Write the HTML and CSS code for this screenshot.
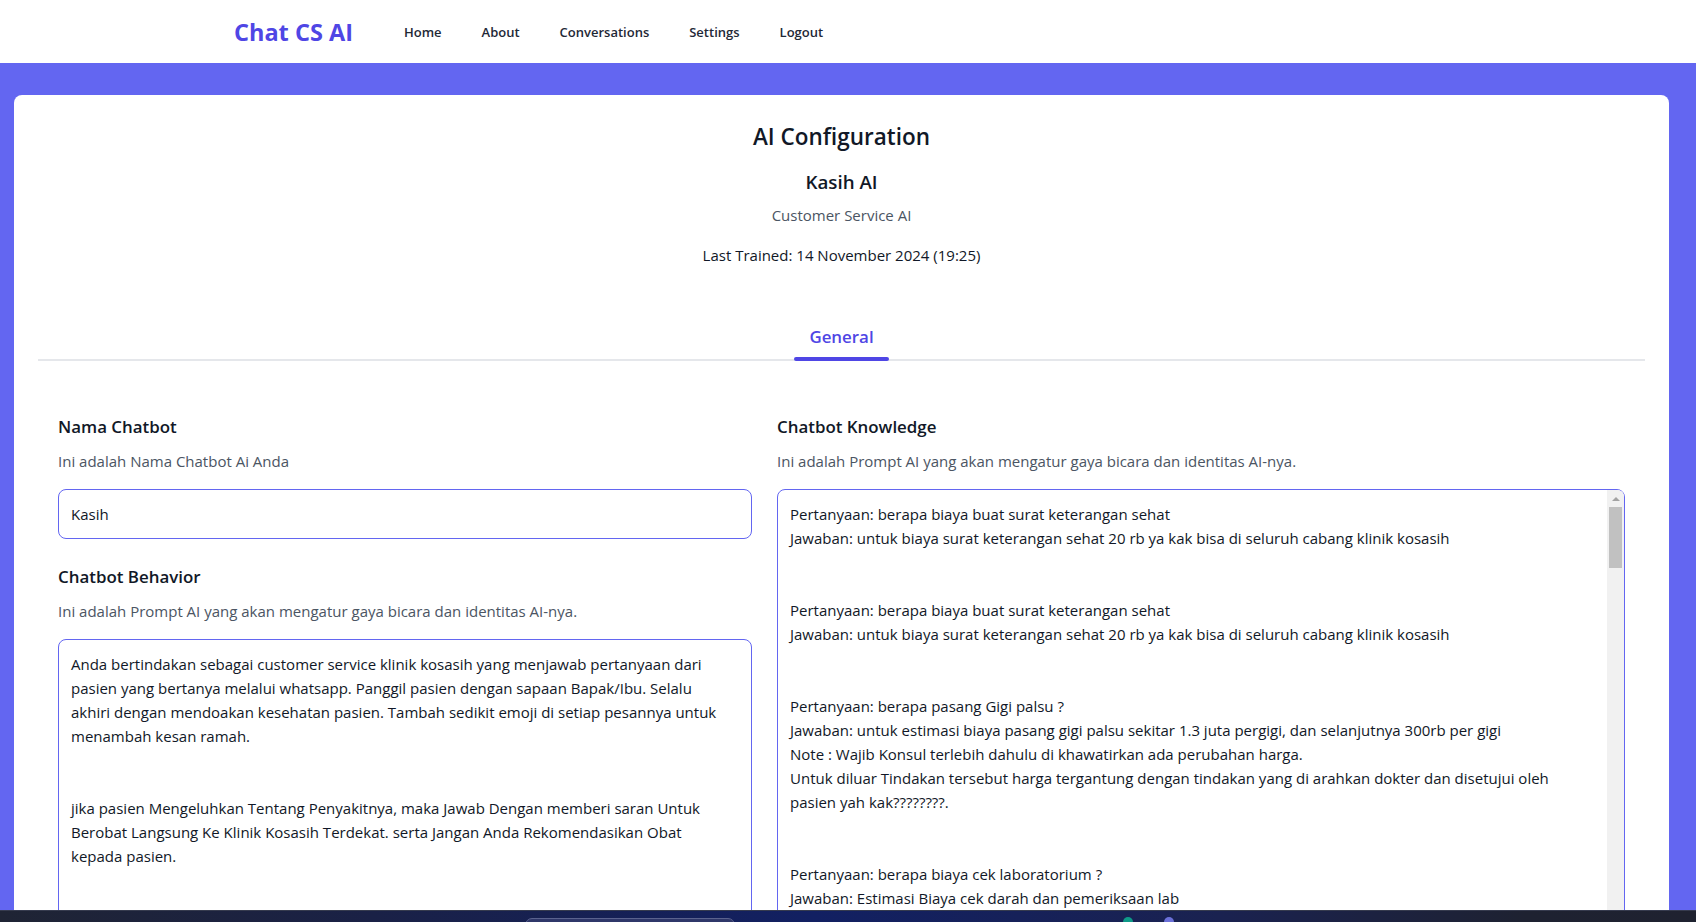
FILE: index.html
```
<!DOCTYPE html>
<html lang="id">
<head>
<meta charset="utf-8">
<title>Chat CS AI - AI Configuration</title>
<link rel="stylesheet" href="styles.css">
</head>
<body>
<header class="topbar">
  <a class="logo" href="#">Chat CS AI</a>
  <nav class="nav">
    <a href="#">Home</a>
    <a href="#">About</a>
    <a href="#">Conversations</a>
    <a href="#">Settings</a>
    <a href="#">Logout</a>
  </nav>
</header>

<main class="page">
  <section class="card">
    <div class="card-head">
      <h1 class="title">AI Configuration</h1>
      <h2 class="bot-name">Kasih AI</h2>
      <p class="bot-role">Customer Service AI</p>
      <p class="trained">Last Trained: 14 November 2024 (19:25)</p>
    </div>

    <div class="tabs">
      <button class="tab active" type="button">General</button>
    </div>

    <div class="form-grid">
      <div class="col">
        <div class="field">
          <h3 class="field-label">Nama Chatbot</h3>
          <p class="field-desc">Ini adalah Nama Chatbot Ai Anda</p>
          <input class="input" type="text" value="Kasih">
        </div>
        <div class="field field-next">
          <h3 class="field-label">Chatbot Behavior</h3>
          <p class="field-desc">Ini adalah Prompt AI yang akan mengatur gaya bicara dan identitas AI-nya.</p>
          <textarea class="textarea behavior" wrap="off">Anda bertindakan sebagai customer service klinik kosasih yang menjawab pertanyaan dari
pasien yang bertanya melalui whatsapp. Panggil pasien dengan sapaan Bapak/Ibu. Selalu
akhiri dengan mendoakan kesehatan pasien. Tambah sedikit emoji di setiap pesannya untuk
menambah kesan ramah.


jika pasien Mengeluhkan Tentang Penyakitnya, maka Jawab Dengan memberi saran Untuk
Berobat Langsung Ke Klinik Kosasih Terdekat. serta Jangan Anda Rekomendasikan Obat
kepada pasien.</textarea>
        </div>
      </div>

      <div class="col">
        <div class="field">
          <h3 class="field-label">Chatbot Knowledge</h3>
          <p class="field-desc">Ini adalah Prompt AI yang akan mengatur gaya bicara dan identitas AI-nya.</p>
          <div class="scroll-box">
            <textarea class="textarea knowledge" wrap="off">Pertanyaan: berapa biaya buat surat keterangan sehat
Jawaban: untuk biaya surat keterangan sehat 20 rb ya kak bisa di seluruh cabang klinik kosasih


Pertanyaan: berapa biaya buat surat keterangan sehat
Jawaban: untuk biaya surat keterangan sehat 20 rb ya kak bisa di seluruh cabang klinik kosasih


Pertanyaan: berapa pasang Gigi palsu ?
Jawaban: untuk estimasi biaya pasang gigi palsu sekitar 1.3 juta pergigi, dan selanjutnya 300rb per gigi
Note : Wajib Konsul terlebih dahulu di khawatirkan ada perubahan harga.
Untuk diluar Tindakan tersebut harga tergantung dengan tindakan yang di arahkan dokter dan disetujui oleh
pasien yah kak????????.


Pertanyaan: berapa biaya cek laboratorium ?
Jawaban: Estimasi Biaya cek darah dan pemeriksaan lab
mulai dari 50rb tergantung jenis pemeriksaan yang diminta ya kak


Pertanyaan: jam buka klinik ?
Jawaban: klinik kosasih buka setiap hari senin - sabtu pukul 08.00 - 21.00 ya kak


Pertanyaan: apakah bisa pakai BPJS ?
Jawaban: bisa kak, klinik kosasih melayani pasien BPJS sesuai faskes yang terdaftar


Pertanyaan: berapa biaya cabut gigi ?
Jawaban: untuk biaya cabut gigi mulai dari 150rb tergantung kondisi gigi ya kak


Pertanyaan: berapa biaya tambal gigi ?
Jawaban: untuk biaya tambal gigi mulai dari 200rb per gigi ya kak


Pertanyaan: berapa biaya scaling / pembersihan karang gigi ?
Jawaban: untuk biaya scaling sekitar 300rb ya kak


Pertanyaan: berapa biaya konsultasi dokter umum ?
Jawaban: biaya konsultasi dokter umum 50rb belum termasuk obat ya kak


Pertanyaan: berapa biaya konsultasi dokter gigi ?
Jawaban: biaya konsultasi dokter gigi 75rb ya kak


Pertanyaan: berapa biaya khitan ?
Jawaban: untuk biaya khitan mulai dari 1 juta tergantung metode yang dipilih ya kak


Pertanyaan: apakah ada layanan imunisasi anak ?
Jawaban: ada kak, silakan datang ke cabang terdekat dengan membawa buku KIA


Pertanyaan: berapa biaya USG ?
Jawaban: untuk biaya USG mulai dari 250rb ya kak


Pertanyaan: apakah ada swab antigen ?
Jawaban: ada kak, biaya swab antigen 85rb dan hasil keluar sekitar 15 menit


Pertanyaan: dimana alamat klinik kosasih ?
Jawaban: klinik kosasih memiliki beberapa cabang, silakan sebutkan lokasi kakak ya


Pertanyaan: apakah bisa daftar online ?
Jawaban: bisa kak, pendaftaran online dapat dilakukan melalui whatsapp ini


Pertanyaan: berapa biaya medical check up ?
Jawaban: paket medical check up mulai dari 350rb ya kak


Pertanyaan: apakah bisa bayar pakai QRIS ?
Jawaban: bisa kak, klinik kosasih menerima pembayaran tunai, debit dan QRIS</textarea>
            <div class="fake-scrollbar" aria-hidden="true">
              <span class="sb-up"></span>
              <span class="sb-thumb"></span>
            </div>
          </div>
        </div>
      </div>
    </div>
  </section>
</main>

<div class="taskbar" aria-hidden="true">
  <span class="tb-search"></span>
  <span class="tb-icon tb-teal"></span>
  <span class="tb-icon tb-violet"></span>
</div>
</body>
</html>
```

FILE: styles.css
```
* { box-sizing: border-box; }

html, body {
  margin: 0;
  height: 100%;
}

body {
  background: #6366f1;
  font-family: "Open Sans", "Noto Sans", sans-serif;
  color: #111827;
  overflow: hidden;
}

a { text-decoration: none; color: inherit; }

/* ---------- top bar ---------- */
.topbar {
  height: 63px;
  background: #ffffff;
  display: flex;
  align-items: center;
  padding-left: 234px;
}

.logo {
  font-size: 23.5px;
  font-weight: 700;
  color: #4f46e5;
  margin-right: 51px;
}

.nav {
  display: flex;
  gap: 40px;
  font-size: 13px;
  font-weight: 600;
  color: #1f2937;
}

/* ---------- page / card ---------- */
.page {
  padding: 32px 27px 0 14px;
}

.card {
  background: #ffffff;
  border-radius: 8px;
  padding: 24px;
  min-height: 1200px;
}

.card-head {
  text-align: center;
}

.title {
  margin: 0;
  font-size: 22.5px;
  line-height: 36px;
  font-weight: 600;
}

.bot-name {
  margin: 13px 0 0;
  font-size: 18.75px;
  line-height: 28px;
  font-weight: 600;
}

.bot-role {
  margin: 7px 0 0;
  font-size: 15px;
  line-height: 24px;
  color: #4b5563;
}

.trained {
  margin: 16px 0 0;
  font-size: 15px;
  line-height: 24px;
}

/* ---------- tabs ---------- */
.tabs {
  margin-top: 50px;
  display: flex;
  justify-content: center;
  border-bottom: 2px solid #e5e7eb;
}

.tab {
  display: flex;
  flex-direction: column;
  align-items: stretch;
  min-width: 95px;
  margin-bottom: -2px;
  padding: 6px 0 0;
  border: 0;
  background: transparent;
  font-family: inherit;
  font-size: 16.9px;
  line-height: 28px;
  font-weight: 600;
  color: #4f46e5;
  cursor: pointer;
}

.tab::after {
  content: "";
  display: block;
  height: 4px;
  margin-top: 6px;
  border-radius: 2px;
  background: #4f46e5;
}

/* ---------- form ---------- */
.form-grid {
  display: grid;
  grid-template-columns: 694fr 848fr;
  column-gap: 25px;
  padding: 52px 20px 0;
}

.field-next {
  margin-top: 24px;
}

.field-label {
  margin: 0;
  font-size: 16.9px;
  line-height: 28px;
  font-weight: 600;
}

.field-desc {
  margin: 8px 0 0;
  font-size: 15px;
  line-height: 24px;
  color: #4b5563;
}

.input,
.textarea {
  display: block;
  width: 100%;
  margin-top: 16px;
  padding: 12px;
  border: 1px solid #6366f1;
  border-radius: 8px;
  background: #ffffff;
  font-family: inherit;
  font-size: 15px;
  line-height: 24px;
  color: #111827;
  outline: none;
}

.input {
  height: 50px;
}

.textarea {
  resize: none;
  white-space: pre;
  overflow: hidden;
}

.behavior {
  height: 420px;
}

/* ---------- knowledge box with classic scrollbar ---------- */
.scroll-box {
  position: relative;
  margin-top: 16px;
}

.knowledge {
  margin-top: 0;
  height: 440px;
  padding-right: 29px;
}

.fake-scrollbar {
  position: absolute;
  top: 1px;
  right: 1px;
  bottom: 1px;
  width: 17px;
  background: #f1f1f1;
  display: flex;
  flex-direction: column;
  align-items: stretch;
  border-top-right-radius: 6px;
}

.sb-up {
  height: 17px;
  display: flex;
  align-items: center;
  justify-content: center;
}

.sb-up::before {
  content: "";
  width: 0;
  height: 0;
  border-left: 4px solid transparent;
  border-right: 4px solid transparent;
  border-bottom: 4px solid #a3a3a3;
}

.sb-thumb {
  height: 61px;
  margin: 0 2px;
  background: #c1c1c1;
}

/* ---------- taskbar strip at the bottom of the screen ---------- */
.taskbar {
  position: fixed;
  left: 0;
  right: 0;
  bottom: 0;
  height: 12px;
  border-top: 1px solid #363b4e;
  background: linear-gradient(90deg, #1f2434 0%, #1a2146 22%, #122062 48%, #1a2250 72%, #1e2231 90%, #1f2230 100%);
}

.tb-search {
  position: absolute;
  left: 525px;
  top: 7px;
  width: 210px;
  height: 14px;
  border-radius: 7px;
  background: #2f3769;
  border: 1px solid #5a628e;
}

.tb-icon {
  position: absolute;
  top: 6px;
  width: 10px;
  height: 10px;
  border-radius: 50%;
}

.tb-teal {
  left: 1123px;
  background: #0f9a88;
}

.tb-violet {
  left: 1164px;
  background: #6b70d8;
}
```
